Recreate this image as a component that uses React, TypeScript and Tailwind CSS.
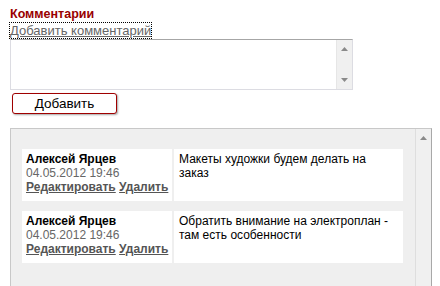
import React from "react"

interface Comment {
  id: number
  author: string
  date: string
  text: string
}

const comments: Comment[] = [
  { id: 1, author: "Алексей Ярцев", date: "04.05.2012 19:46", text: "Макеты художки будем делать на заказ" },
  { id: 2, author: "Алексей Ярцев", date: "04.05.2012 19:46", text: "Обратить внимание на электроплан - там есть особенности" },
]

function ArrowUp() {
  return (
    <svg width="9" height="6" viewBox="0 0 9 6">
      <path d="M4.5 1 L8 5 L1 5 Z" fill="#8a8a8a" />
    </svg>
  )
}

function ArrowDown() {
  return (
    <svg width="9" height="6" viewBox="0 0 9 6">
      <path d="M1 1 L8 1 L4.5 5 Z" fill="#8a8a8a" />
    </svg>
  )
}

export default function App() {
  return (
    <div
      className="w-[440px] h-[286px] overflow-hidden bg-white text-[12px] text-black"
      style={{ fontFamily: '"Liberation Sans", Arial, sans-serif' }}
    >
      <div className="pl-[10px] pt-[6px]">
        <div className="font-bold text-[12.5px] text-[#990000] leading-[16px]">Комментарии</div>

        <div className="mt-[2px] leading-[14px] text-[13px]">
          <a className="text-[#666] underline outline-1 outline-dotted outline-black cursor-pointer">
            Добавить комментарий
          </a>
        </div>

        {/* textarea */}
        <div className="mt-[1px] flex w-[343px] h-[51px] border border-[#dcdce2] border-t-[#a6a6a6] bg-white">
          <div className="flex-1" />
          <div className="w-[16px] bg-[#f0f0f0] border-l border-[#e6e6e6] flex flex-col items-center justify-between py-[6px]">
            <ArrowUp />
            <ArrowDown />
          </div>
        </div>

        <button className="mt-[3px] ml-[2px] w-[105px] h-[21px] rounded-[3px] border border-[#a00000] bg-white text-[13.5px] leading-[18px] shadow-[1px_1px_2px_rgba(0,0,0,0.35)]">
          Добавить
        </button>

        {/* comments panel */}
        <div className="mt-[14px] flex w-[422px] h-[172px] border border-[#c8c8c8] border-r-[#a8a8a8] bg-[#efefef]">
          <div className="flex-1 pl-[11px] pt-[20px] flex flex-col gap-[10px]">
            {comments.map((c) => (
              <div key={c.id} className="flex w-[381px] h-[52px] gap-[2px]">
                <div className="w-[150px] bg-white pl-[4px] pt-[3px] leading-[14px]">
                  <div className="font-bold text-[12px]">{c.author}</div>
                  <div className="text-[#666] text-[12px]">{c.date}</div>
                  <div className="font-bold text-[#555] whitespace-nowrap">
                    <a className="underline cursor-pointer">Редактировать</a>{" "}
                    <a className="underline cursor-pointer">Удалить</a>
                  </div>
                </div>
                <div className="flex-1 bg-white pl-[5px] pr-[6px] pt-[3px] leading-[14px]">{c.text}</div>
              </div>
            ))}
          </div>
          <div className="w-[16px] border-l border-[#dedede] bg-[#f0f0f0] flex flex-col items-center pt-[6px]">
            <ArrowUp />
          </div>
        </div>
      </div>
    </div>
  )
}
